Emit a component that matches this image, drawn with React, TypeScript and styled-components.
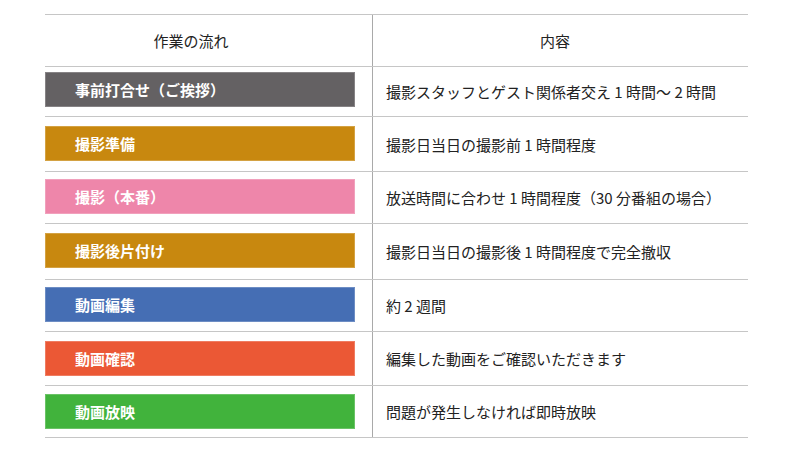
import styled, { createGlobalStyle } from "styled-components";

const GlobalStyle = createGlobalStyle`
  body {
    margin: 0;
    background: #ffffff;
    font-family: "Noto Sans CJK JP", "Noto Sans", sans-serif;
    color: #222222;
  }
`;

const Page = styled.div`
  width: 800px;
  height: 450px;
  padding: 14px 0 0 45px;
  box-sizing: border-box;
`;

const Table = styled.div`
  width: 703px;
  border-bottom: 1px solid #c6c6c6;
`;

const Row = styled.div`
  display: grid;
  grid-template-columns: 327px 1fr;
  border-top: 1px solid #c6c6c6;
`;

const HeadCell = styled.div<{ $right?: boolean; $shift: number }>`
  height: 51px;
  display: flex;
  align-items: center;
  justify-content: center;
  padding-right: ${(p) => p.$shift}px;
  font-size: 15px;
  line-height: 1;
  border-left: ${(p) => (p.$right ? "1px solid #a9a9a9" : "none")};
`;

const StepCell = styled.div<{ $top: number; $bottom: number }>`
  padding: ${(p) => p.$top}px 0 ${(p) => p.$bottom}px;
`;

const StepBar = styled.div<{ $color: string }>`
  width: 310px;
  height: 35px;
  box-sizing: border-box;
  background: ${(p) => p.$color};
  border: 1px solid rgba(255, 255, 255, 0.22);
  display: flex;
  align-items: center;
  padding-left: 29px;
  color: #ffffff;
  font-size: 15px;
  font-weight: 700;
  line-height: 1;
`;

const DetailCell = styled.div`
  display: flex;
  align-items: center;
  padding-left: 13px;
  border-left: 1px solid #a9a9a9;
  font-size: 15px;
  line-height: 1;
  white-space: pre;
`;

type Step = {
  name: string;
  color: string;
  detail: string;
  top: number;
  bottom: number;
};

const steps: Step[] = [
  { name: "事前打合せ（ご挨拶）", color: "#646163", detail: "撮影スタッフとゲスト関係者交え 1 時間～ 2 時間", top: 5, bottom: 9 },
  { name: "撮影準備", color: "#c8880f", detail: "撮影日当日の撮影前 1 時間程度", top: 9, bottom: 10 },
  { name: "撮影（本番）", color: "#ee86aa", detail: "放送時間に合わせ 1 時間程度（30 分番組の場合）", top: 7, bottom: 9 },
  { name: "撮影後片付け", color: "#c8880f", detail: "撮影日当日の撮影後 1 時間程度で完全撤収", top: 9, bottom: 11 },
  { name: "動画編集", color: "#456eb4", detail: "約 2 週間", top: 7, bottom: 9 },
  { name: "動画確認", color: "#eb5835", detail: "編集した動画をご確認いただきます", top: 9, bottom: 9 },
  { name: "動画放映", color: "#41b33c", detail: "問題が発生しなければ即時放映", top: 8, bottom: 8 },
];

export default function App() {
  return (
    <>
      <GlobalStyle />
      <Page>
        <Table>
          <Row>
            <HeadCell $shift={35}>作業の流れ</HeadCell>
            <HeadCell $right $shift={11}>内容</HeadCell>
          </Row>
          {steps.map((s) => (
            <Row key={s.name}>
              <StepCell $top={s.top} $bottom={s.bottom}>
                <StepBar $color={s.color}>{s.name}</StepBar>
              </StepCell>
              <DetailCell>{s.detail}</DetailCell>
            </Row>
          ))}
        </Table>
      </Page>
    </>
  );
}
